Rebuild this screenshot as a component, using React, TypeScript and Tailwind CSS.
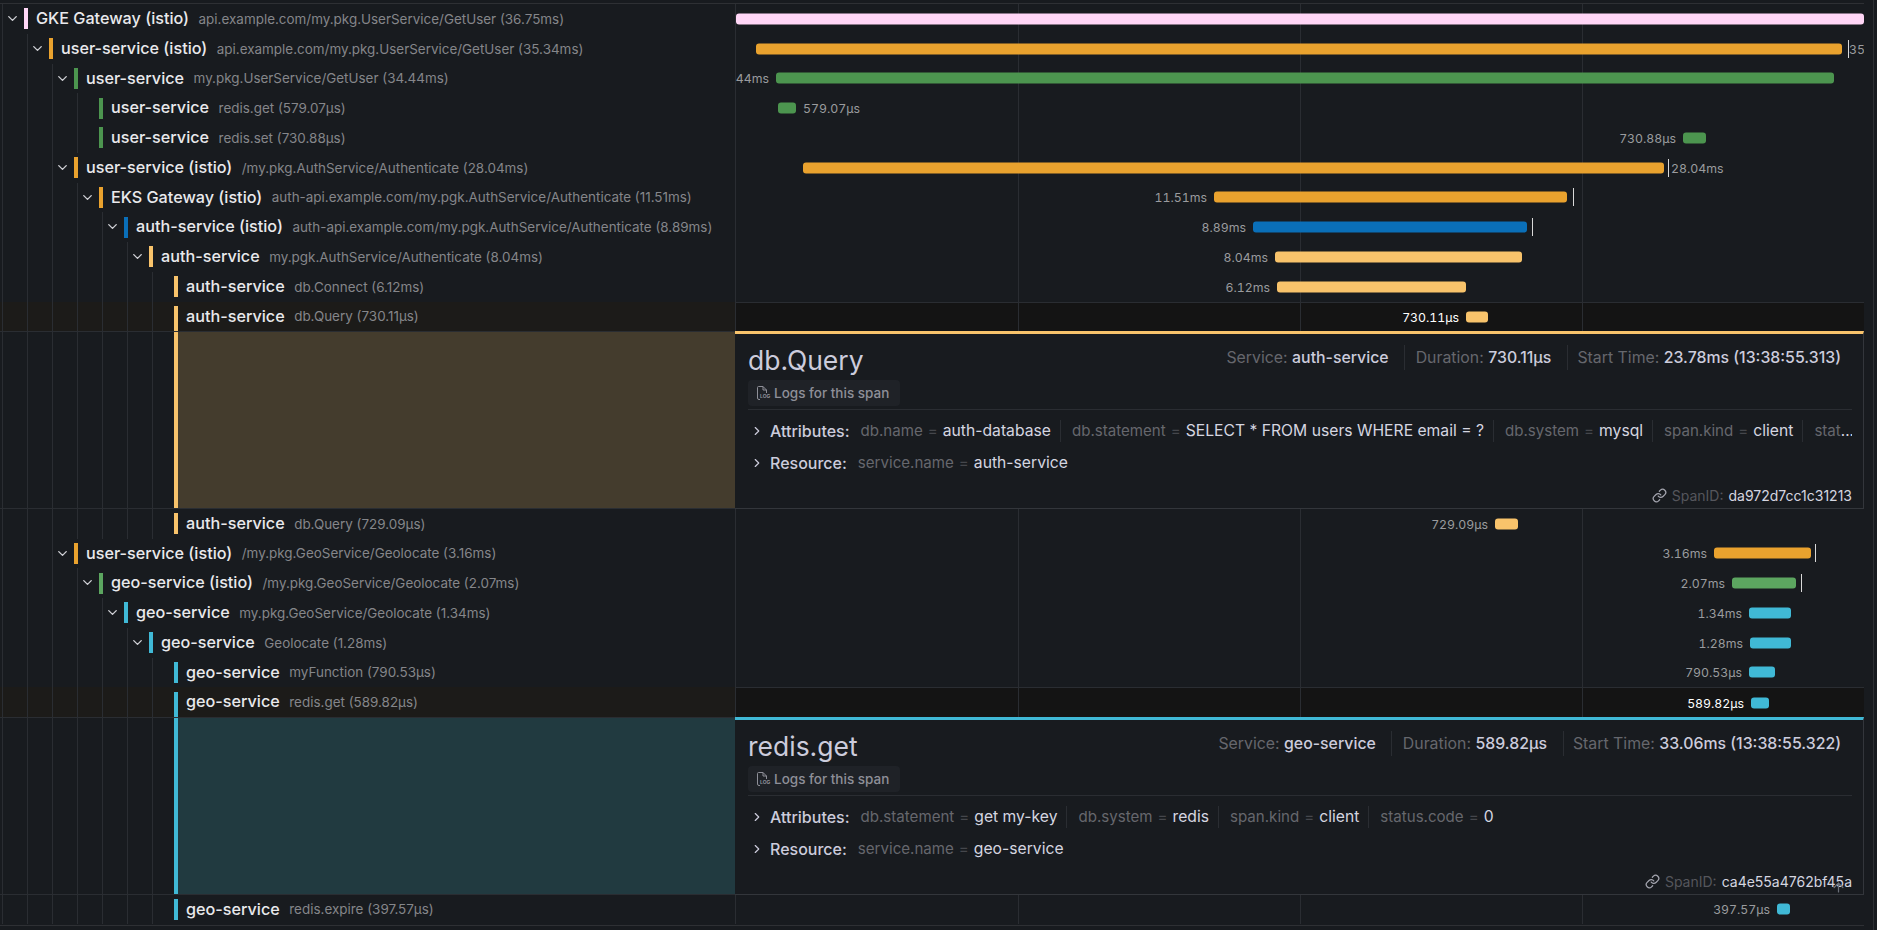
import { ArrowUp, ChevronDown, ChevronRight, Link } from "lucide-react";

const PINK = "bg-[#ffd6f6]";
const ORANGE = "bg-[#e9a22e]";
const GREEN = "bg-[#4c954f]";
const LIGHT_GREEN = "bg-[#5ca660]";
const BLUE = "bg-[#0a6fb8]";
const YELLOW = "bg-[#f8c36b]";
const TEAL = "bg-[#40b9d6]";

type Span = {
  depth: number;
  name: string;
  desc: string;
  color: string;
  bar: [number, number];
  label: string;
  side: "left" | "right";
  tick?: number;
  labelAt?: number;
  parent?: boolean;
  selected?: boolean;
};

type Detail = {
  title: string;
  color: string;
  block: string;
  service: string;
  duration: string;
  start: string;
  attributes: [string, string][];
  resource: string;
  spanId: string;
  arrow?: boolean;
};

// the timeline cell has a 1px left border, its children are measured from 736
const ORIGIN = 736;
const WIDTH = 1128;

const firstSpans: Span[] = [
  { depth: 0, name: "GKE Gateway (istio)", desc: "api.example.com/my.pkg.UserService/GetUser (36.75ms)", color: PINK, bar: [736, 1864], label: "", side: "right", parent: true },
  { depth: 1, name: "user-service (istio)", desc: "api.example.com/my.pkg.UserService/GetUser (35.34ms)", color: ORANGE, bar: [756, 1842], label: "35.34ms", side: "right", tick: 1848, labelAt: 1849, parent: true },
  { depth: 2, name: "user-service", desc: "my.pkg.UserService/GetUser (34.44ms)", color: GREEN, bar: [776, 1834], label: "34.44ms", side: "left", parent: true },
  { depth: 3, name: "user-service", desc: "redis.get (579.07µs)", color: GREEN, bar: [778, 796], label: "579.07µs", side: "right" },
  { depth: 3, name: "user-service", desc: "redis.set (730.88µs)", color: GREEN, bar: [1683, 1706], label: "730.88µs", side: "left" },
  { depth: 2, name: "user-service (istio)", desc: "/my.pkg.AuthService/Authenticate (28.04ms)", color: ORANGE, bar: [803, 1664], label: "28.04ms", side: "right", tick: 1668, parent: true },
  { depth: 3, name: "EKS Gateway (istio)", desc: "auth-api.example.com/my.pgk.AuthService/Authenticate (11.51ms)", color: ORANGE, bar: [1214, 1567], label: "11.51ms", side: "left", tick: 1573, parent: true },
  { depth: 4, name: "auth-service (istio)", desc: "auth-api.example.com/my.pgk.AuthService/Authenticate (8.89ms)", color: BLUE, bar: [1253, 1527], label: "8.89ms", side: "left", tick: 1532, parent: true },
  { depth: 5, name: "auth-service", desc: "my.pgk.AuthService/Authenticate (8.04ms)", color: YELLOW, bar: [1275, 1522], label: "8.04ms", side: "left", parent: true },
  { depth: 6, name: "auth-service", desc: "db.Connect (6.12ms)", color: YELLOW, bar: [1277, 1466], label: "6.12ms", side: "left" },
  { depth: 6, name: "auth-service", desc: "db.Query (730.11µs)", color: YELLOW, bar: [1466, 1488], label: "730.11µs", side: "left", selected: true },
];

const secondSpans: Span[] = [
  { depth: 6, name: "auth-service", desc: "db.Query (729.09µs)", color: YELLOW, bar: [1495, 1518], label: "729.09µs", side: "left" },
  { depth: 2, name: "user-service (istio)", desc: "/my.pkg.GeoService/Geolocate (3.16ms)", color: ORANGE, bar: [1714, 1811], label: "3.16ms", side: "left", tick: 1815, parent: true },
  { depth: 3, name: "geo-service (istio)", desc: "/my.pkg.GeoService/Geolocate (2.07ms)", color: LIGHT_GREEN, bar: [1732, 1796], label: "2.07ms", side: "left", tick: 1801, parent: true },
  { depth: 4, name: "geo-service", desc: "my.pkg.GeoService/Geolocate (1.34ms)", color: TEAL, bar: [1749, 1791], label: "1.34ms", side: "left", parent: true },
  { depth: 5, name: "geo-service", desc: "Geolocate (1.28ms)", color: TEAL, bar: [1750, 1791], label: "1.28ms", side: "left", parent: true },
  { depth: 6, name: "geo-service", desc: "myFunction (790.53µs)", color: TEAL, bar: [1749, 1775], label: "790.53µs", side: "left" },
  { depth: 6, name: "geo-service", desc: "redis.get (589.82µs)", color: TEAL, bar: [1751, 1769], label: "589.82µs", side: "left", selected: true },
];

const lastSpans: Span[] = [
  { depth: 6, name: "geo-service", desc: "redis.expire (397.57µs)", color: TEAL, bar: [1777, 1790], label: "397.57µs", side: "left" },
];

function Guides({ depth }: { depth: number }) {
  return (
    <>
      {Array.from({ length: depth + 1 }).map((_, i) => (
        <span
          key={i}
          className={`${i === depth ? "w-[22px]" : "w-[25px]"} h-full shrink-0 border-l border-[#2a2d32]`}
        />
      ))}
    </>
  );
}

function Ticks() {
  return (
    <>
      <span className="absolute top-0 bottom-0 left-1/4 w-px bg-[#2a2d32]" />
      <span className="absolute top-0 bottom-0 left-1/2 w-px bg-[#2a2d32]" />
      <span className="absolute top-0 bottom-0 left-3/4 w-px bg-[#2a2d32]" />
    </>
  );
}

function SpanRow({ span }: { span: Span }) {
  const [x0, x1] = span.bar;
  const left = x0 - ORIGIN;
  const right = x1 - ORIGIN;
  const afterBar = span.labelAt
    ? span.labelAt - ORIGIN
    : span.tick
      ? span.tick - ORIGIN + 3
      : right + 7;

  return (
    <div className={`flex h-[29.75px] ${span.selected ? "bg-[#1c1b19]" : ""}`}>
      <div className="w-[735px] shrink-0 flex items-stretch pl-[2px] relative overflow-hidden">
        <Guides depth={span.depth} />
        {span.parent && (
          <ChevronDown
            size={15}
            strokeWidth={2.2}
            className="absolute top-[7px] text-[#d0d1d6]"
            style={{ left: 5 + span.depth * 25 }}
          />
        )}
        <div className="flex-1 min-w-0 flex items-center">
          <span className={`w-1 shrink-0 ${span.color} ${span.selected ? "self-end h-[25px]" : "h-[21px]"}`} />
          <span className="ml-2 -mt-px text-[16.2px] font-medium text-[#e9e9ec] whitespace-nowrap">{span.name}</span>
          <span className="ml-[9.5px] text-[13.45px] text-[#85868a] whitespace-nowrap">{span.desc}</span>
        </div>
      </div>
      <div
        className={`w-[1129px] shrink-0 relative overflow-hidden border-l border-[#2a2d32] ${
          span.selected ? "bg-[#141414] border-t" : ""
        }`}
      >
        <Ticks />
        <span
          className={`absolute top-1/2 -translate-y-1/2 h-[11px] rounded-[3px] ${span.color}`}
          style={{ left, width: right - left }}
        />
        {span.tick && (
          <span
            className="absolute top-1/2 -translate-y-1/2 h-[18px] w-px bg-[#d9d9d9]"
            style={{ left: span.tick - ORIGIN }}
          />
        )}
        {span.label && (
          <span
            className={`absolute top-[calc(50%+1px)] -translate-y-1/2 text-[12.3px] tabular-nums whitespace-nowrap ${
              span.selected ? "text-white" : "text-[#9a9b9e]"
            }`}
            style={span.side === "left" ? { right: WIDTH - left + 7 } : { left: afterBar }}
          >
            {span.label}
          </span>
        )}
      </div>
    </div>
  );
}

function LogsIcon() {
  return (
    <svg width="15" height="16" viewBox="0 0 15 16" fill="none" stroke="#8e8f98" strokeWidth="1">
      <path d="M1.5 13V2.5a1 1 0 0 1 1-1h4.5l3.5 3.5V8M1.5 13a1.5 1.5 0 0 0 1.5 1.5h1" />
      <path d="M7 1.5v3.5h3.5" />
      <text x="4" y="13" fontSize="5" fontWeight="700" fill="#8e8f98" stroke="none">
        LOG
      </text>
    </svg>
  );
}

function DetailRow({ detail, depth }: { detail: Detail; depth: number }) {
  return (
    <div className="flex h-[177.5px]">
      <div className="w-[735px] shrink-0 flex items-stretch pl-[2px] border-t border-b border-[#2a2d32]">
        <Guides depth={depth} />
        <div className={`flex-1 ${detail.block} border-l-4 ${detail.color}`} />
      </div>
      <div
        className={`w-[1129px] shrink-0 relative flex flex-col bg-[#181b1f] border-t-[3px] border-r border-b border-b-[#33363b] border-r-[#33363b] pl-[13px] pr-[11px] ${detail.color}`}
      >
        <div className="flex justify-between items-start h-[36px]">
          <h2 className="text-[26.5px] leading-[32px] mt-[10px] text-[#ccccdc]">{detail.title}</h2>
          <div className="flex items-center h-[25px] mt-[11px] mr-[11px] text-[15.85px]">
            <span className="text-[#66676d]">
              Service: <span className="font-medium text-[#ccccdc]">{detail.service}</span>
            </span>
            <span className="h-full w-px bg-[#2a2d32] ml-[15px] mr-[11px]" />
            <span className="text-[#66676d]">
              Duration: <span className="font-medium text-[#ccccdc]">{detail.duration}</span>
            </span>
            <span className="h-full w-px bg-[#2a2d32] ml-[16px] mr-[9px]" />
            <span className="text-[#66676d]">
              Start Time: <span className="font-medium text-[#ccccdc]">{detail.start}</span>
            </span>
          </div>
        </div>
        <div className="mt-[10px] border-b border-[#2a2d32] pb-[3px]">
          <button className="flex items-center gap-[3px] h-[26px] w-[152px] pl-2 rounded-sm bg-[#1f2227] text-[13.5px] font-medium text-[#8e8f98]">
            <LogsIcon />
            Logs for this span
          </button>
        </div>
        <div className="flex items-center h-[32px] mt-[5px] overflow-hidden">
          <ChevronRight size={14} strokeWidth={2} className="ml-[2px] mr-[6px] shrink-0 text-[#ccccdc]" />
          <span className="font-medium text-[16px] text-[#ccccdc] mr-[11px] shrink-0">Attributes:</span>
          {detail.attributes.map(([key, value], i) => (
            <span key={key} className="flex items-center h-[22px] whitespace-nowrap">
              {i > 0 && <span className="h-full w-px bg-[#2a2d32] ml-[9px] mr-[11px]" />}
              <span className="text-[#66676d] text-[15.1px]">{key}</span>
              {value === "..." ? (
                <span className="text-[#d5d6e0] text-[15.1px]">{value}</span>
              ) : (
                <>
                  <span className="text-[#45474c] text-[15.1px] mx-[5px]">=</span>
                  <span className="text-[#d5d6e0] text-[15.7px]">{value}</span>
                </>
              )}
            </span>
          ))}
        </div>
        <div className="flex items-center h-[32px]">
          <ChevronRight size={14} strokeWidth={2} className="ml-[2px] mr-[6px] shrink-0 text-[#ccccdc]" />
          <span className="font-medium text-[16px] text-[#ccccdc] mr-[11px]">Resource:</span>
          <span className="text-[#66676d] text-[15.1px]">service.name</span>
          <span className="text-[#45474c] text-[15.1px] mx-[5px]">=</span>
          <span className="text-[#d5d6e0] text-[15.7px]">{detail.resource}</span>
        </div>
        <div className="mt-auto mb-[2px] flex items-center justify-end gap-[5px] text-[14px]">
          <Link size={15} className="text-[#a5a6b0]" />
          <span className="text-[#55565c]">SpanID:</span>
          <span className="text-[#d5d6e0]">{detail.spanId}</span>
        </div>
        {detail.arrow && (
          <ArrowUp size={15} className="absolute right-[17px] bottom-[-1px] text-[#6b7079]" />
        )}
      </div>
    </div>
  );
}

const dbQuery: Detail = {
  title: "db.Query",
  color: "border-[#f8c36b]",
  block: "bg-[#443c2d]",
  service: "auth-service",
  duration: "730.11µs",
  start: "23.78ms (13:38:55.313)",
  attributes: [
    ["db.name", "auth-database"],
    ["db.statement", "SELECT * FROM users WHERE email = ?"],
    ["db.system", "mysql"],
    ["span.kind", "client"],
    ["stat", "..."],
  ],
  resource: "auth-service",
  spanId: "da972d7cc1c31213",
};

const redisGet: Detail = {
  title: "redis.get",
  color: "border-[#40b9d6]",
  block: "bg-[#213a40]",
  service: "geo-service",
  duration: "589.82µs",
  start: "33.06ms (13:38:55.322)",
  attributes: [
    ["db.statement", "get my-key"],
    ["db.system", "redis"],
    ["span.kind", "client"],
    ["status.code", "0"],
  ],
  resource: "geo-service",
  spanId: "ca4e55a4762bf45a",
  arrow: true,
};

export default function App() {
  return (
    <div className="h-[930px] w-[1877px] overflow-hidden flex bg-[#181b1f] font-['Inter',sans-serif]">
      <div className="w-[1864px] shrink-0 mt-[3px] h-[923px] border-t border-b border-[#2e3034] flex flex-col">
        {firstSpans.map((span, i) => (
          <SpanRow key={i} span={span} />
        ))}
        <DetailRow detail={dbQuery} depth={6} />
        {secondSpans.map((span, i) => (
          <SpanRow key={i} span={span} />
        ))}
        <DetailRow detail={redisGet} depth={6} />
        {lastSpans.map((span, i) => (
          <SpanRow key={i} span={span} />
        ))}
      </div>
      <div className="w-[10px] shrink-0 border-r border-[#2e3034]" />
    </div>
  );
}
